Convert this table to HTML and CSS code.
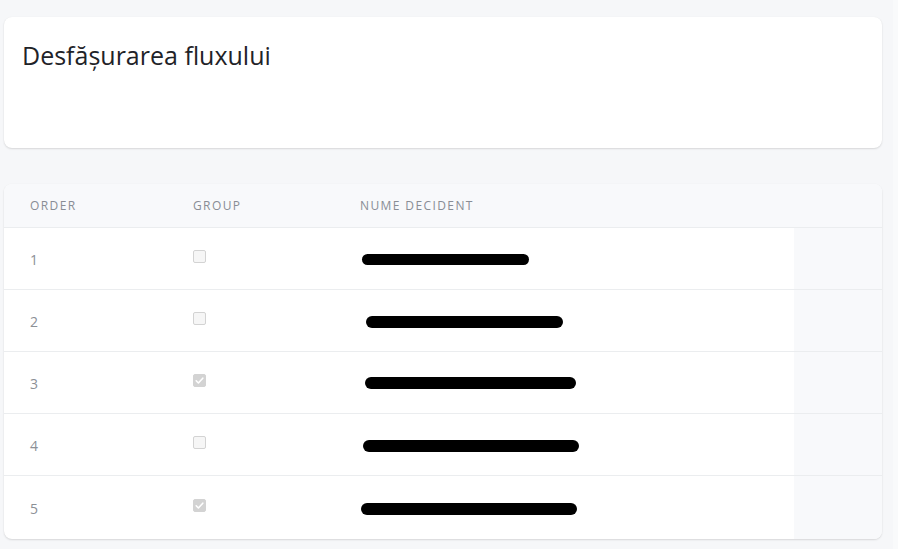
FILE: index.html
```html
<!DOCTYPE html>
<html lang="ro">
<head>
<meta charset="utf-8">
<title>Desfășurarea fluxului</title>
<link rel="stylesheet" href="styles.css">
</head>
<body>
<div class="layout">
  <main class="page">
    <section class="card title-card">
      <h1 class="title">Desfășurarea fluxului</h1>
    </section>

    <section class="card table-card">
      <div class="row head">
        <div class="cell">ORDER</div>
        <div class="cell">GROUP</div>
        <div class="cell">NUME DECIDENT</div>
        <div class="cell side"></div>
      </div>
      <div class="row">
        <div class="cell num">1</div>
        <div class="cell"><span class="check"></span></div>
        <div class="cell"><span class="redact" style="margin-left:2px;width:167px;height:11px;margin-top:2px"></span></div>
        <div class="cell side"></div>
      </div>
      <div class="row">
        <div class="cell num">2</div>
        <div class="cell"><span class="check"></span></div>
        <div class="cell"><span class="redact" style="margin-left:6px;width:197px;height:12px;margin-top:2px"></span></div>
        <div class="cell side"></div>
      </div>
      <div class="row">
        <div class="cell num">3</div>
        <div class="cell"><span class="check checked"><svg viewBox="0 0 13 13" width="13" height="13"><path d="M3.2 6.8 L5.4 9 L9.8 4.2" fill="none" stroke="#fff" stroke-width="1.6" stroke-linecap="round" stroke-linejoin="round"/></svg></span></div>
        <div class="cell"><span class="redact" style="margin-left:5px;width:211px;height:12px;margin-top:1px"></span></div>
        <div class="cell side"></div>
      </div>
      <div class="row">
        <div class="cell num">4</div>
        <div class="cell"><span class="check"></span></div>
        <div class="cell"><span class="redact" style="margin-left:3px;width:216px;height:12px;margin-top:2px"></span></div>
        <div class="cell side"></div>
      </div>
      <div class="row last">
        <div class="cell num">5</div>
        <div class="cell"><span class="check checked"><svg viewBox="0 0 13 13" width="13" height="13"><path d="M3.2 6.8 L5.4 9 L9.8 4.2" fill="none" stroke="#fff" stroke-width="1.6" stroke-linecap="round" stroke-linejoin="round"/></svg></span></div>
        <div class="cell"><span class="redact" style="margin-left:1px;width:216px;height:12px;margin-top:3px"></span></div>
        <div class="cell side"></div>
      </div>
    </section>
  </main>
  <div class="edge"></div>
</div>
</body>
</html>
```

FILE: styles.css
```css
* { box-sizing: border-box; }

html, body {
  margin: 0;
  padding: 0;
  height: 100%;
}

body {
  background: #f6f7f9;
  font-family: "Open Sans", "Noto Sans", sans-serif;
  overflow: hidden;
}

.layout {
  display: flex;
  height: 549px;
}

.page {
  width: 893px;
  padding: 17px 11px 0 4px;
  display: flex;
  flex-direction: column;
  gap: 36px;
}

.edge {
  flex: 1;
  background: #f9fafb;
}

.card {
  background: #fff;
  border-radius: 8px;
  box-shadow: 0 1px 2px rgba(0, 0, 0, 0.13), 0 0 1px rgba(0, 0, 0, 0.05);
  width: 878px;
}

.title-card {
  height: 131px;
  padding: 20px 18px;
}

.title {
  margin: 0;
  font-size: 25px;
  line-height: 36px;
  font-weight: 400;
  color: #1f2328;
}

.table-card {
  overflow: hidden;
}

.row {
  display: grid;
  grid-template-columns: 163px 167px 460px 88px;
  height: 62px;
  border-bottom: 1px solid #ebedef;
}

.row.last {
  border-bottom: 0;
  height: 63px;
}

.row.head {
  height: 44px;
  background: #f8f9fb;
}

.cell {
  display: flex;
  align-items: center;
  padding-left: 26px;
}

.head .cell {
  font-size: 12px;
  letter-spacing: 1.4px;
  color: #898d95;
}

.cell.side {
  background: #f8f9fb;
  padding: 0;
}

.num {
  font-size: 14px;
  color: #8c9096;
  padding-top: 2px;
}

.check {
  display: inline-block;
  width: 13px;
  height: 13px;
  border: 1px solid #d3d3d3;
  border-radius: 2px;
  background: #f6f6f6;
  margin-bottom: 4px;
  position: relative;
}

.check.checked {
  border-color: #d3d3d3;
  background: #d3d3d3;
}

.check svg {
  position: absolute;
  left: -1px;
  top: -1px;
}

.redact {
  display: block;
  background: #000;
  border-radius: 6px;
}
```
